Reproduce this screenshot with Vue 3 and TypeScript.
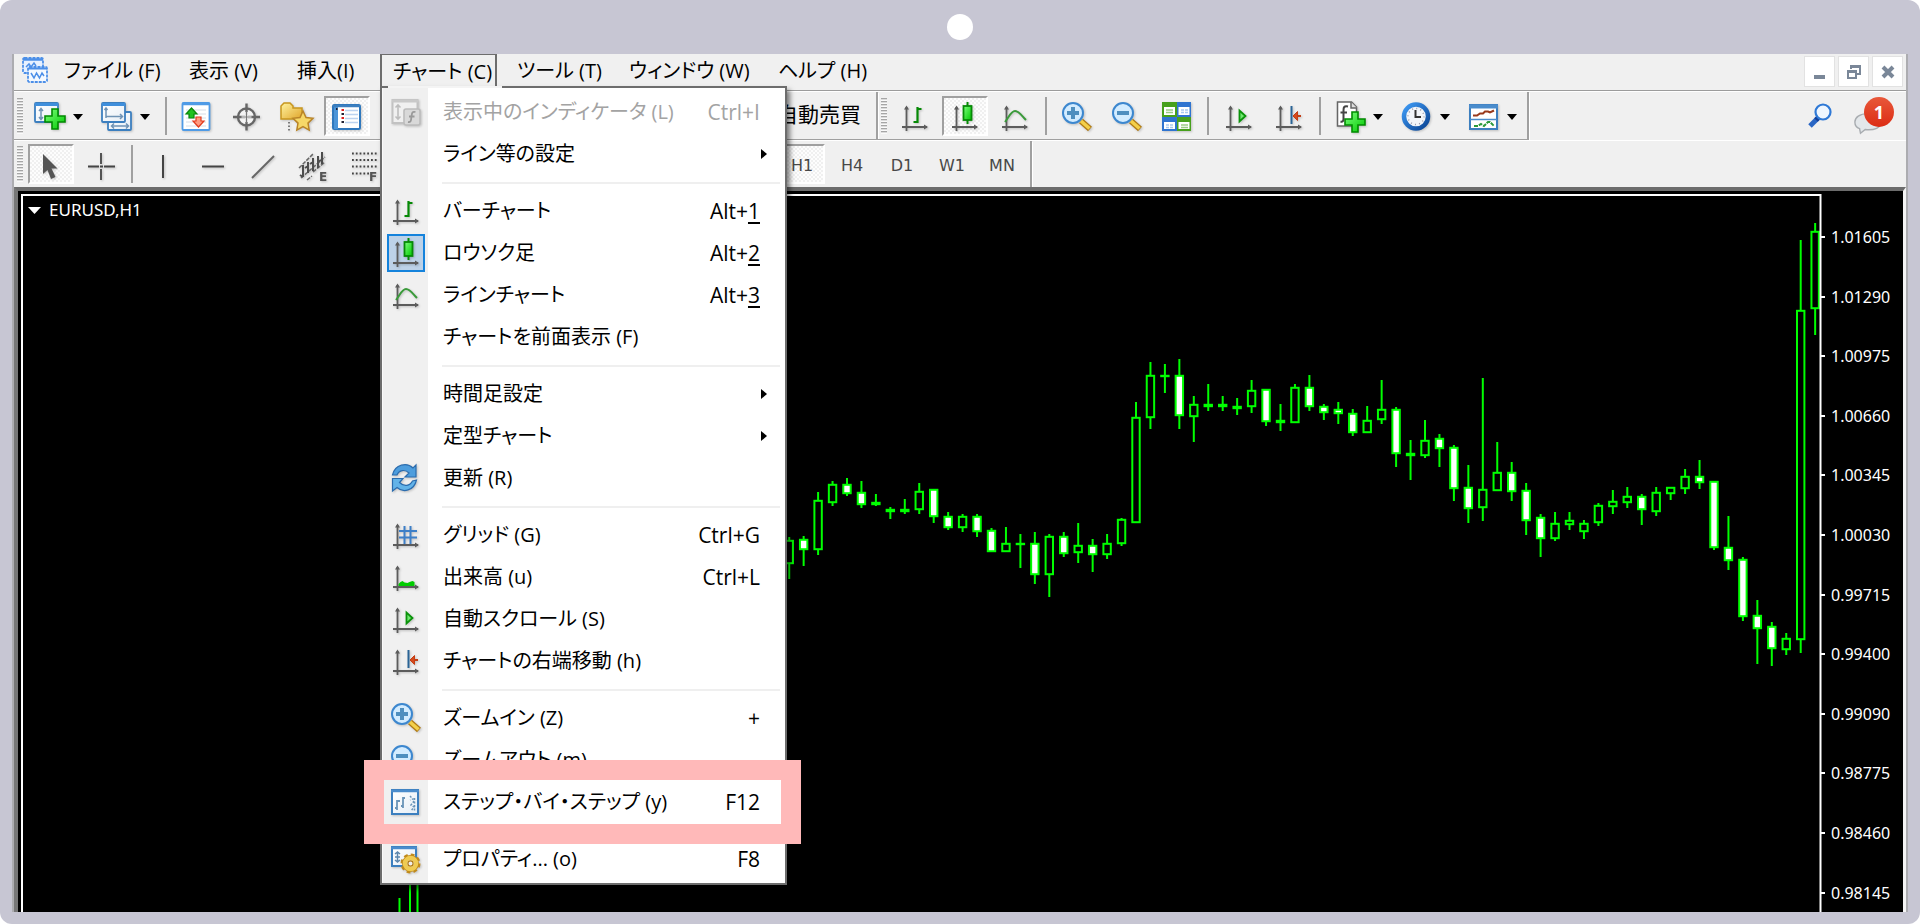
<script setup lang="ts">
interface Tool {
  icon: string
  label: string
  drop?: boolean
  pressed?: boolean
}

interface MenuRow {
  label: string
  icon?: string
  keys?: string
  access?: string
  sub?: boolean
  disabled?: boolean
  checked?: boolean
  marked?: boolean
}

const menus = ['ファイル (F)', '表示 (V)', '挿入(I)', 'チャート (C)', 'ツール (T)', 'ウィンドウ (W)', 'ヘルプ (H)']
const openMenu = 3

const standardTools: Tool[][] = [
  [
    { icon: 'new-chart', label: '新規チャート', drop: true },
    { icon: 'profiles', label: '組表示', drop: true },
  ],
  [
    { icon: 'market', label: '気配値表示' },
    { icon: 'target', label: 'データ' },
    { icon: 'folder', label: 'ナビゲーター' },
    { icon: 'list', label: 'ターミナル', pressed: true },
  ],
]

const chartTools: Tool[][] = [
  [
    { icon: 'bars', label: 'バーチャート' },
    { icon: 'candles', label: 'ロウソク足', pressed: true },
    { icon: 'line', label: 'ラインチャート' },
  ],
  [
    { icon: 'zoom-in', label: 'ズームイン' },
    { icon: 'zoom-out', label: 'ズームアウト' },
    { icon: 'tile', label: '整列' },
  ],
  [
    { icon: 'scroll', label: '自動スクロール' },
    { icon: 'shift', label: 'チャートの右端移動' },
  ],
  [
    { icon: 'indicator', label: 'インディケータ', drop: true },
    { icon: 'clock', label: '時間足設定', drop: true },
    { icon: 'template', label: '定型チャート', drop: true },
  ],
]

const drawTools: Tool[][] = [
  [
    { icon: 'pointer', label: 'カーソル', pressed: true },
    { icon: 'cross', label: 'クロスヘア' },
  ],
  [
    { icon: 'vline', label: '垂直線' },
    { icon: 'hline', label: '水平線' },
    { icon: 'trend', label: 'トレンドライン' },
    { icon: 'channel', label: 'チャネル' },
    { icon: 'fibo', label: 'フィボナッチ' },
  ],
]

const frames = ['H1', 'H4', 'D1', 'W1', 'MN']

const rows: MenuRow[][] = [
  [
    { label: '表示中のインディケータ (L)', icon: 'indicator-list', keys: 'Ctrl+I', disabled: true },
    { label: 'ライン等の設定', sub: true },
  ],
  [
    { label: 'バーチャート', icon: 'bars', keys: 'Alt+', access: '1' },
    { label: 'ロウソク足', icon: 'candles', keys: 'Alt+', access: '2', checked: true },
    { label: 'ラインチャート', icon: 'line', keys: 'Alt+', access: '3' },
    { label: 'チャートを前面表示 (F)' },
  ],
  [
    { label: '時間足設定', sub: true },
    { label: '定型チャート', sub: true },
    { label: '更新 (R)', icon: 'refresh' },
  ],
  [
    { label: 'グリッド (G)', icon: 'grid', keys: 'Ctrl+G' },
    { label: '出来高 (u)', icon: 'volume', keys: 'Ctrl+L' },
    { label: '自動スクロール (S)', icon: 'scroll' },
    { label: 'チャートの右端移動 (h)', icon: 'shift' },
  ],
  [
    { label: 'ズームイン (Z)', icon: 'zoom-in', keys: '+' },
    { label: 'ズームアウト (m)', icon: 'zoom-out' },
    { label: 'ステップ・バイ・ステップ (y)', icon: 'step', keys: 'F12', marked: true },
  ],
  [{ label: 'プロパティ... (o)', icon: 'properties', keys: 'F8' }],
]

// [high, body top, body bottom, low, falling]
type Candle = [number, number, number, number, number]
const candles: Candle[] = [
  [537, 540, 564, 579, 0], [536, 539, 550, 566, 1], [492, 500, 550, 555, 0], [481, 484, 503, 506, 0],
  [478, 484, 494, 496, 1], [481, 492, 505, 508, 1], [494, 502, 505, 506, 0], [507, 509, 512, 519, 0],
  [499, 509, 512, 514, 0], [483, 491, 510, 514, 0], [489, 489, 517, 523, 1], [512, 516, 528, 530, 1],
  [514, 516, 528, 532, 0], [514, 516, 532, 537, 1], [528, 530, 552, 552, 1], [527, 543, 552, 552, 0],
  [534, 543, 544, 568, 0], [532, 543, 575, 584, 1], [534, 536, 575, 597, 0], [532, 536, 554, 557, 1],
  [523, 545, 553, 563, 0], [539, 545, 555, 572, 1], [534, 543, 555, 559, 0], [518, 519, 544, 546, 0],
  [402, 417, 523, 523, 0], [362, 375, 418, 429, 0], [364, 375, 376, 393, 0], [359, 375, 416, 429, 1],
  [396, 404, 417, 442, 0], [384, 404, 407, 411, 0], [396, 404, 407, 411, 0], [398, 406, 409, 415, 0],
  [380, 390, 407, 413, 0], [389, 389, 422, 426, 1], [404, 420, 423, 431, 0], [384, 387, 423, 423, 0],
  [375, 387, 407, 411, 1], [404, 406, 413, 420, 1], [402, 409, 414, 424, 1], [409, 413, 433, 436, 1],
  [406, 420, 433, 433, 0], [380, 409, 420, 424, 0], [407, 409, 454, 467, 1], [440, 453, 456, 480, 0],
  [420, 440, 456, 458, 0], [434, 438, 449, 467, 1], [445, 447, 489, 501, 1], [465, 487, 509, 523, 1],
  [378, 489, 508, 521, 0], [442, 472, 491, 491, 0], [462, 472, 492, 501, 1], [483, 490, 521, 535, 1],
  [514, 517, 539, 557, 1], [512, 523, 539, 541, 0], [512, 520, 525, 530, 0], [520, 523, 532, 539, 0],
  [503, 505, 523, 526, 0], [490, 501, 507, 514, 0], [487, 496, 503, 508, 0], [494, 496, 510, 525, 1],
  [487, 492, 512, 516, 0], [487, 487, 494, 500, 0], [469, 476, 489, 494, 0], [460, 476, 483, 489, 1],
  [481, 481, 548, 550, 1], [516, 547, 561, 570, 1], [557, 559, 617, 621, 1], [600, 615, 629, 664, 1],
  [622, 626, 649, 666, 1], [633, 638, 650, 655, 0], [240, 310, 640, 653, 0], [223, 231, 309, 335, 0],
]
const firstX = 789.2
const stepX = 14.45
const bars = candles.map(([high, top, bottom, low, falling], i) => ({
  x: firstX + i * stepX,
  high,
  top,
  bottom,
  low,
  falling: falling === 1,
  flat: bottom - top < 4,
}))

const prices = [
  '1.01605', '1.01290', '1.00975', '1.00660', '1.00345', '1.00030',
  '0.99715', '0.99400', '0.99090', '0.98775', '0.98460', '0.98145',
].map((text, i) => ({ text, y: Math.round(237 + i * 59.6) }))
</script>

<template>
  <div class="frame">
    <svg class="defs" aria-hidden="true">
      <defs>
        <linearGradient id="g-green" x1="0" y1="0" x2="1" y2="1"><stop offset="0" stop-color="#7dff7d" /><stop offset="1" stop-color="#00c800" /></linearGradient>
        <linearGradient id="g-blue" x1="0" y1="0" x2="1" y2="1"><stop offset="0" stop-color="#3f9bf5" /><stop offset="1" stop-color="#0a4494" /></linearGradient>
        <linearGradient id="g-win" x1="0" y1="0" x2="1" y2="1"><stop offset="0" stop-color="#fff" /><stop offset="1" stop-color="#e6eef6" /></linearGradient>
        <linearGradient id="g-gold" x1="0" y1="0" x2="1" y2="1"><stop offset="0" stop-color="#fff3a0" /><stop offset="1" stop-color="#e0a52a" /></linearGradient>

        <symbol id="axes" viewBox="0 0 32 32">
          <path d="M7.500 30V6M3 26H28" stroke="#5c5c5c" stroke-width="1.800" fill="none" />
          <path d="M5 8.500L7.500 4.500L10 8.500zM25 23.500L29 26L25 28.500z" fill="#5c5c5c" />
        </symbol>
        <symbol id="plus" viewBox="0 0 22 22">
          <path d="M8 1h6v7h7v6h-7v7h-6v-7h-7v-6h7z" fill="url(#g-green)" stroke="#008a00" stroke-width="1.600" />
        </symbol>
        <symbol id="new-chart" viewBox="0 0 32 32">
          <rect x="1" y="2" width="23" height="19" rx="1" fill="url(#g-win)" stroke="#3c7fbf" stroke-width="1.800" />
          <path d="M1 3.500H24" stroke="#3f8fdc" stroke-width="3" />
          <path d="M7 8v10M5 10l2-2.500 2 2.500M5 16l2 2.500 2-2.500" stroke="#6f93b5" stroke-width="1.500" fill="none" />
          <use href="#plus" x="10" y="7" width="22" height="22" />
        </symbol>
        <symbol id="profiles" viewBox="0 0 32 32">
          <rect x="7" y="11" width="23" height="18" rx="1" fill="url(#g-win)" stroke="#3c7fbf" stroke-width="1.800" />
          <path d="M11 25h16M13 22.500l-2.500 2.500 2.500 2.500M25 22.500l2.500 2.500-2.500 2.500" stroke="#6f93b5" stroke-width="1.500" fill="none" />
          <rect x="1" y="2" width="23" height="19" rx="1" fill="url(#g-win)" stroke="#3c7fbf" stroke-width="1.800" />
          <path d="M1 3.500H24" stroke="#3f8fdc" stroke-width="3" />
          <path d="M5 7v10M3.500 9l1.500-2 1.500 2M5 15.500h16M19 13l2.500 2.500-2.500 2.500" stroke="#6f93b5" stroke-width="1.500" fill="none" />
        </symbol>
        <symbol id="market" viewBox="0 0 32 32">
          <rect x="1.500" y="2" width="27" height="27" rx="1" fill="#fff" stroke="#4f9be6" stroke-width="1.800" />
          <path d="M1.500 3H28.500" stroke="#4f9be6" stroke-width="2.500" />
          <path d="M5 9h20M5 13h20M5 17h20M5 21h20M5 25h20" stroke="#d6dde6" stroke-width="1" />
          <path d="M10.500 7l5.500 6h-3v4h-5v-4h-3z" fill="#1fc21f" stroke="#0a870a" stroke-width="1.200" />
          <path d="M17.500 26l5.500-6h-3v-4h-5v4h-3z" fill="#ff9a80" stroke="#e23a1c" stroke-width="1.200" />
        </symbol>
        <symbol id="target" viewBox="0 0 32 32">
          <circle cx="15.500" cy="16" r="8.500" fill="#f4f4f4" stroke="#666" stroke-width="2.400" />
          <path d="M15.500 2.500v27M2 16h27" stroke="#666" stroke-width="2.400" />
          <path d="M15.500 11v10M10.500 16h10" stroke="#f4f4f4" stroke-width="2.600" />
          <path d="M15.500 10v12M9.500 16h12" stroke="#777" stroke-width="1" />
        </symbol>
        <symbol id="folder" viewBox="0 0 36 32">
          <path d="M2 18V5l3-3h6l3 3v2h9v11z" fill="url(#g-gold)" stroke="#c8961e" stroke-width="1.500" />
          <path d="M10 21v10" stroke="#555" stroke-width="1.500" stroke-dasharray="1.500 2" />
          <path d="M24 10l3 6.500 7 .8-5 4.800 1.200 7-6.200-3.400-6.200 3.400 1.200-7-5-4.800 7-.8z" fill="#f6d868" stroke="#b98428" stroke-width="1.500" />
        </symbol>
        <symbol id="list" viewBox="0 0 32 32">
          <rect x="2" y="4" width="27" height="24" rx="1.500" fill="#fff" stroke="#2f78bd" stroke-width="2" />
          <rect x="3" y="4" width="4" height="24" fill="#4a94d8" />
          <path d="M2 5H29" stroke="#3c7fbf" stroke-width="2.500" />
          <path d="M14 9.500h13M14 13.500h13M14 17.500h13M14 21.500h13" stroke="#bcd3f0" stroke-width="1.500" />
          <path d="M10.500 9h2.500M10.500 17h2.500" stroke="#e02020" stroke-width="2" />
          <path d="M10.500 13h2.500M10.500 21h2.500M5 8h1.500" stroke="#223" stroke-width="2" />
        </symbol>
        <symbol id="bars" viewBox="0 0 32 32">
          <use href="#axes" width="32" height="32" />
          <path d="M18.500 6v16M18.500 8h4M14.500 21h4" stroke="#068a06" stroke-width="2.200" fill="none" />
        </symbol>
        <symbol id="candles" viewBox="0 0 32 32">
          <use href="#axes" width="32" height="32" />
          <path d="M18.500 1v22" stroke="#068a06" stroke-width="2" />
          <rect x="14.500" y="5" width="8" height="14" fill="url(#g-green)" stroke="#068a06" stroke-width="1.800" />
        </symbol>
        <symbol id="line" viewBox="0 0 32 32">
          <use href="#axes" width="32" height="32" />
          <path d="M6 21C10 16 12 10 16 10C20 10 23 15 27 19" stroke="#3a9a3a" stroke-width="2" fill="none" />
        </symbol>
        <symbol id="zoom-in" viewBox="0 0 32 32">
          <path d="M20 20l9 8" stroke="#b07a14" stroke-width="6" />
          <path d="M20 20l8.500 7.500" stroke="#f3cf4a" stroke-width="3.500" />
          <circle cx="12" cy="12" r="10" fill="#d3ecff" stroke="#3c87cf" stroke-width="2" />
          <path d="M12 6v12M6 12h12" stroke="#4f8fbf" stroke-width="4" />
        </symbol>
        <symbol id="zoom-out" viewBox="0 0 32 32">
          <path d="M20 20l9 8" stroke="#b07a14" stroke-width="6" />
          <path d="M20 20l8.500 7.500" stroke="#f3cf4a" stroke-width="3.500" />
          <circle cx="12" cy="12" r="10" fill="#d3ecff" stroke="#3c87cf" stroke-width="2" />
          <path d="M6 12h12" stroke="#4f8fbf" stroke-width="4" />
        </symbol>
        <symbol id="tile" viewBox="0 0 32 32">
          <path d="M1 1h15v15H1zM16 16h14v14H16z" fill="#47a01c" />
          <path d="M16 1h14v15H16zM1 16h15v14H1z" fill="#2f74d0" />
          <path d="M3 6h11v8H3zM17.500 6h11v8h-11zM3 21h11v7H3zM17.500 21h11v7h-11z" fill="#fff" />
          <path d="M5 9h7M5 11.500h7M20 24h7M20 26.500h7" stroke="#9ccb85" stroke-width="1.500" />
          <path d="M20 9h7M20 11.500h7M5 24h7M5 26.500h7" stroke="#a9c9f0" stroke-width="1.500" stroke-dasharray="3 1" />
        </symbol>
        <symbol id="scroll" viewBox="0 0 32 32">
          <use href="#axes" width="32" height="32" />
          <path d="M16.500 9.500v11l6-5.500z" fill="#6fe86f" stroke="#0a930a" stroke-width="1.800" />
        </symbol>
        <symbol id="shift" viewBox="0 0 32 32">
          <use href="#axes" width="32" height="32" />
          <path d="M18.500 5v18" stroke="#2a6496" stroke-width="2" />
          <path d="M28 15h-7" stroke="#c43e14" stroke-width="2" />
          <path d="M24.500 10.500l-4.500 4.500 4.500 4.500z" fill="#d64a1c" stroke="#c43e14" stroke-width="1" />
        </symbol>
        <symbol id="indicator" viewBox="0 0 32 32">
          <path d="M3.500 1h14l5 5v19h-19z" fill="#fff" stroke="#666" stroke-width="1.500" />
          <path d="M17 1v6h6" fill="#ddd" stroke="#666" stroke-width="1.500" />
          <path d="M14 5.500c-4-1-4.500 1-4.500 4v8c0 3-1 3.500-3 3M6.500 11.500h6.500" stroke="#444" stroke-width="2" fill="none" />
          <use href="#plus" x="10" y="10" width="22" height="22" />
        </symbol>
        <symbol id="clock" viewBox="0 0 32 32">
          <circle cx="15" cy="15.500" r="12" fill="#f2f5f9" stroke="url(#g-blue)" stroke-width="4.500" />
          <circle cx="15" cy="15.500" r="8" fill="none" stroke="#99a" stroke-width="1.500" stroke-dasharray="1 3.190" />
          <path d="M14.500 9v7h5.500" stroke="#333" stroke-width="2" fill="none" />
        </symbol>
        <symbol id="template" viewBox="0 0 32 32">
          <rect x="2" y="4" width="27" height="24" fill="#fff" stroke="#3c7fbf" stroke-width="2" />
          <path d="M1 5.500H30" stroke="#4a8ccc" stroke-width="4" />
          <path d="M2 18.500h27" stroke="#4a8ccc" stroke-width="1.500" />
          <path d="M5 14.500h4l3-2h3l2-2h3l2 1 4-2" stroke="#993a1c" stroke-width="2" fill="none" />
          <path d="M6 25h4l3-2 3 2 4-4h2l4 4" stroke="#2a9a3a" stroke-width="2" stroke-dasharray="4 1" fill="none" />
        </symbol>
        <symbol id="pointer" viewBox="0 0 32 32">
          <path d="M8 4v20l4.500-4 3.500 9 4.500-2-4-8.500h6z" fill="#555" />
        </symbol>
        <symbol id="cross" viewBox="0 0 32 32">
          <path d="M16 3v11M16 19v11M3 16.500h11M19 16.500h11M15 16.500h3" stroke="#444" stroke-width="1.800" />
        </symbol>
        <symbol id="vline" viewBox="0 0 32 32"><path d="M16 5v23" stroke="#444" stroke-width="2" /></symbol>
        <symbol id="hline" viewBox="0 0 32 32"><path d="M5 16.500h22" stroke="#444" stroke-width="2" /></symbol>
        <symbol id="trend" viewBox="0 0 32 32"><path d="M5 28L27 6" stroke="#666" stroke-width="2" /></symbol>
        <symbol id="channel" viewBox="0 0 32 32">
          <path d="M2 18L16 4M4 28L28 7M10 30l5-4M16 22L28 12" stroke="#666" stroke-width="1.500" stroke-dasharray="4 1.200" fill="none" />
          <path d="M6 15v12M11 12v11M16 8v13M21 6v12M25 2v12M3 25l3 2M8 18l3-2M13 14l3-2M21 12l3-2" stroke="#4c4c4c" stroke-width="2" />
          <text x="22" y="31" class="mini">E</text>
        </symbol>
        <symbol id="fibo" viewBox="0 0 32 32">
          <path d="M5 3.500h25M5 10h25M5 16.500h25M5 23.500h17" stroke="#444" stroke-width="1.800" stroke-dasharray="1.800 2" />
          <text x="22" y="31" class="mini">F</text>
        </symbol>
        <symbol id="refresh" viewBox="0 0 32 32">
          <path d="M2.500 13C5 2 17 0 23 6l3-3v12H15l4-4C15 7 9 8 7 13z" fill="#4d9ddd" stroke="#2b6cae" stroke-width="1.200" />
          <path d="M26.500 18C24 29 13 31 7 25.500l-4.500 3.500V16.500H13l-3.500 4C14 25 20 24 22.500 19z" fill="#63b3e8" stroke="#2b6cae" stroke-width="1.200" />
        </symbol>
        <symbol id="grid" viewBox="0 0 32 32">
          <use href="#axes" width="32" height="32" />
          <path d="M14.500 7v18M20.500 7v18M9 12h18M9 18.500h18" stroke="#3c7fc8" stroke-width="2" />
        </symbol>
        <symbol id="volume" viewBox="0 0 32 32">
          <use href="#axes" width="32" height="32" />
          <path d="M8.500 25v-3l3-1 3-2 2 2 3-1 2 1 3-2 2 2v4z" fill="#0d1a0d00" />
          <path d="M8.500 25v-2l2-2 2-1 2 1.500 3 .5 2-1 3-1 2 1v4z" fill="#0c0" />
        </symbol>
        <symbol id="step" viewBox="0 0 32 32">
          <rect x="2" y="4" width="26" height="24" fill="url(#g-win)" stroke="#3c7fbf" stroke-width="2" />
          <path d="M1 5H29" stroke="#4a8ccc" stroke-width="2.500" />
          <path d="M7 14v10M5 22h2M7 15h3M13 11v11M11 20h2M13 12h2" stroke="#6a94b8" stroke-width="1.800" />
          <path d="M20 10l3 3-3 1M24 15l-3 4 3 2-3 4M24.500 12v13" stroke="#6a94b8" stroke-width="1.500" stroke-dasharray="2 1.500" fill="none" />
        </symbol>
        <symbol id="properties" viewBox="0 0 32 32">
          <rect x="2" y="4" width="24" height="19" fill="url(#g-win)" stroke="#3c7fbf" stroke-width="2" />
          <path d="M1 5H27" stroke="#4a8ccc" stroke-width="2.500" />
          <path d="M7.500 9v10M5 11l2.500-2 2.500 2M5 17l2.500 2 2.500-2M5 14h5" stroke="#5d87ad" stroke-width="1.500" fill="none" />
          <circle cx="20.500" cy="20.500" r="8.500" fill="none" stroke="#c08a1c" stroke-width="3" stroke-dasharray="3.700 2.970" />
          <circle cx="20.500" cy="20.500" r="5.500" fill="#fff" stroke="#c08a1c" stroke-width="6" />
          <circle cx="20.500" cy="20.500" r="5.500" fill="#fff" stroke="#efcb52" stroke-width="4.500" />
          <circle cx="20.500" cy="20.500" r="2.600" fill="#eee" stroke="#b07a14" stroke-width="1.200" />
        </symbol>
        <symbol id="indicator-list" viewBox="0 0 32 32">
          <rect x="2.500" y="4" width="25" height="23" fill="#f0f0f0" stroke="#c2c2c2" stroke-width="2" />
          <path d="M2 5h26" stroke="#c9c9c9" stroke-width="3" />
          <path d="M8 9v14M5.500 11.500L8 9l2.500 2.500M5.500 20.500L8 23l2.500-2.500" stroke="#bdbdbd" stroke-width="1.600" fill="none" />
          <rect x="14" y="13" width="16" height="16" rx="2" fill="#d9d9d9" stroke="#bcbcbc" stroke-width="1.600" />
          <path d="M25.500 16c-3-.8-3.500.5-3.800 3l-.7 5c-.3 2-1 2.300-3 2M19 20.500h5.500" stroke="#999" stroke-width="1.800" fill="none" />
        </symbol>
        <symbol id="logo" viewBox="0 0 26 26">
          <rect x="1" y="1" width="20" height="15" rx="1.500" fill="#e7f1ff" stroke="#4c8fe8" stroke-width="1.800" stroke-dasharray="3 1" />
          <path d="M1 2.500h20" stroke="#4c8fe8" stroke-width="2.500" />
          <path d="M4 10l3-3 2 3 3-4 2 3" stroke="#4c8fe8" stroke-width="1.500" fill="none" />
          <rect x="6" y="10" width="19" height="15" rx="1.500" fill="#f4f9ff" stroke="#4c8fe8" stroke-width="1.800" stroke-dasharray="3 1" />
          <path d="M6 11.500h19" stroke="#4c8fe8" stroke-width="2" />
          <path d="M9 16l3 5 2.500-5 3 5 2.500-5 2 3" stroke="#4c8fe8" stroke-width="1.500" fill="none" />
        </symbol>
      </defs>
    </svg>

    <span class="camera"></span>

    <main class="window">
      <header class="menubar">
        <svg class="logo"><use href="#logo" /></svg>
        <nav class="menus">
          <div v-for="(name, i) in menus" :key="name" class="menu-slot">
            <button type="button" class="menu-name" :class="{ open: i === openMenu }">{{ name }}</button>
            <div v-if="i === openMenu" class="dropdown" role="menu">
              <div v-for="(group, g) in rows" :key="g" class="menu-group">
                <button
                  v-for="row in group"
                  :key="row.label"
                  type="button"
                  role="menuitem"
                  class="row"
                  :class="{ marked: row.marked }"
                  :disabled="row.disabled"
                >
                  <span class="gutter" :class="{ checked: row.checked }">
                    <svg v-if="row.icon" class="icon"><use :href="'#' + row.icon" /></svg>
                  </span>
                  <span class="row-label">{{ row.label }}</span>
                  <span v-if="row.keys" class="keys">{{ row.keys }}<u v-if="row.access">{{ row.access }}</u></span>
                  <svg v-if="row.sub" class="sub" viewBox="0 0 6 10"><path d="M0 0v10l6-5z" /></svg>
                </button>
              </div>
            </div>
          </div>
        </nav>
        <div class="controls">
          <button type="button" aria-label="最小化">
            <svg viewBox="0 0 16 16"><path d="M2 13h11" stroke="#7a8798" stroke-width="4" /></svg>
          </button>
          <button type="button" aria-label="元に戻す">
            <svg viewBox="0 0 16 16"><path d="M5 5V2h9v8h-3" stroke="#7a8798" stroke-width="2" fill="none" /><path d="M4 2.500h11" stroke="#7a8798" stroke-width="3" /><path d="M2 7h8v7H2zM2 8h8" stroke="#7a8798" stroke-width="2" fill="none" /></svg>
          </button>
          <button type="button" aria-label="閉じる">
            <svg viewBox="0 0 16 16"><path d="M3 3l10 10M13 3L3 13" stroke="#7a8798" stroke-width="4" /></svg>
          </button>
        </div>
      </header>

      <div class="bar">
        <section class="group standard">
          <span class="grip"></span>
          <template v-for="(set, s) in standardTools" :key="s">
            <span v-if="s > 0" class="rule"></span>
            <button v-for="t in set" :key="t.icon" type="button" class="tool" :class="{ drop: t.drop, pressed: t.pressed }" :aria-label="t.label">
              <svg class="icon" :class="{ wide: t.icon === 'folder' }"><use :href="'#' + t.icon" /></svg>
              <span v-if="t.drop" class="caret"></span>
            </button>
          </template>
          <button type="button" class="auto">自動売買</button>
        </section>
        <section class="group">
          <span class="grip"></span>
          <template v-for="(set, s) in chartTools" :key="s">
            <span v-if="s > 0" class="rule"></span>
            <button v-for="t in set" :key="t.icon" type="button" class="tool" :class="{ drop: t.drop, pressed: t.pressed }" :aria-label="t.label">
              <svg class="icon"><use :href="'#' + t.icon" /></svg>
              <span v-if="t.drop" class="caret"></span>
            </button>
          </template>
        </section>
        <div class="aside">
          <button type="button" class="find" aria-label="検索">
            <svg viewBox="0 0 26 26"><path d="M12 14L3 23" stroke="#2a66c4" stroke-width="5" /><path d="M12 14L9 17" stroke="#123f9a" stroke-width="5" /><circle cx="16" cy="9" r="7.500" fill="#eef6ff" stroke="#2f79d6" stroke-width="2.200" /></svg>
          </button>
          <button type="button" class="chat">
            <svg viewBox="0 0 32 24"><path d="M16 2C7 2 2 6 2 11c0 4 2 6 5 7l1 5 5-4c10 1 17-2 17-8C30 5 24 2 16 2z" fill="#e3e7ea" stroke="#a8acb0" stroke-width="1.500" /></svg>
            <span class="badge">1</span>
          </button>
        </div>
      </div>

      <div class="bar second">
        <section class="group standard-draw">
          <span class="grip"></span>
          <template v-for="(set, s) in drawTools" :key="s">
            <span v-if="s > 0" class="rule"></span>
            <button v-for="t in set" :key="t.icon" type="button" class="tool" :class="{ pressed: t.pressed }" :aria-label="t.label">
              <svg class="icon"><use :href="'#' + t.icon" /></svg>
            </button>
          </template>
          <div class="frames">
            <button v-for="f in frames" :key="f" type="button" class="tool period" :class="{ pressed: f === 'H1' }">{{ f }}</button>
          </div>
        </section>
      </div>

      <div class="chart">
        <svg viewBox="18 191 1885 721" preserveAspectRatio="xMaxYMin slice" role="img" aria-label="EURUSD,H1">
          <g class="bars">
            <path d="M399.500 898V914M410 860V914M417.500 860V914" />
            <g v-for="b in bars" :key="b.x" :class="{ falling: b.falling, flat: b.flat }">
              <path :d="`M${b.x} ${b.high}V${b.low}`" />
              <rect :x="b.x - 3.7" :y="b.top + 0.8" width="7.4" :height="Math.max(b.bottom - b.top - 1.6, 0.4)" />
            </g>
          </g>
          <path class="border" d="M22 914V195H1820.500V914" />
          <path d="M28 207h13l-6.500 7z" fill="#fff" />
          <text class="symbol-name" x="49" y="216">EURUSD,H1</text>
          <g v-for="p in prices" :key="p.text">
            <path class="border" :d="`M1821 ${p.y}h4`" />
            <text class="price" x="1831" :y="p.y + 6">{{ p.text }}</text>
          </g>
        </svg>
      </div>
    </main>
  </div>
</template>

<style>
body {
  margin: 0;
  background: #fff;
}
</style>

<style scoped>
* {
  box-sizing: border-box;
}

.frame {
  display: flex;
  flex-direction: column;
  height: 100vh;
  padding: 0 12px 12px;
  border-radius: 12px;
  background: #c7c6d3;
  color: #000;
  font-family: "Open Sans", "Noto Sans CJK JP", sans-serif;
  font-size: 20px;
  font-feature-settings: "palt";
  line-height: 24px;
  overflow: hidden;
}

.defs {
  position: absolute;
  width: 0;
  height: 0;
}

.mini {
  font: 700 12px "DejaVu Sans", sans-serif;
  fill: #555;
}

.camera {
  flex: none;
  align-self: center;
  width: 26px;
  height: 26px;
  margin: 14px 0;
  border-radius: 50%;
  background: #fff;
}

.window {
  flex: 1;
  min-height: 0;
  display: flex;
  flex-direction: column;
  border: solid #acacb0;
  border-width: 0 2px;
  background: #f0f0f0;
}

button {
  padding: 0;
  border: 0;
  background: none;
  color: inherit;
  font: inherit;
  font-feature-settings: inherit;
  text-align: left;
  white-space: nowrap;
}

.menubar {
  flex: none;
  display: flex;
  align-items: flex-start;
  height: 37px;
  border-bottom: 1px solid #9c9c9c;
}

.logo {
  width: 26px;
  height: 26px;
  margin: 3px 3px 0 8px;
}

.menus {
  display: grid;
  grid-template-columns: 125px 108px 96px 124px 112px 149px 112px;
}

.menu-slot {
  position: relative;
}

.menu-name {
  height: 34px;
  padding: 0 12px;
  border: 1px solid transparent;
}

.menu-name.open {
  width: 117px;
  border: solid #6d6d6d;
  border-width: 1px 2px 0;
  padding: 0 11px;
}

.dropdown {
  position: absolute;
  z-index: 5;
  top: 32px;
  left: 0;
  width: 407px;
  padding: 3px 0;
  border: 2px solid #6d6d6d;
  background: linear-gradient(90deg, #fafafa 1px, #f0f0f0 1px 46px, #fff 46px);
  box-shadow: 3px 4px 5px rgba(0, 0, 0, 0.5);
}

.dropdown::before {
  content: "";
  position: absolute;
  top: -2px;
  left: 6px;
  width: 114px;
  height: 2px;
  background: #f4f4f4;
}

.menu-group + .menu-group {
  margin-top: 15px;
}

.menu-group + .menu-group::before {
  content: "";
  position: absolute;
  left: 60px;
  right: 5px;
  height: 2px;
  margin-top: -8px;
  background: #efefef;
}

.row {
  position: relative;
  display: flex;
  align-items: center;
  width: 100%;
  height: 42px;
  padding-right: 25px;
}

.row:disabled {
  color: #a3a3a3;
}

.gutter {
  display: flex;
  align-items: center;
  justify-content: center;
  width: 38px;
  height: 38px;
  margin: 0 18px 0 5px;
}

.gutter.checked {
  border: 2px solid #1583dc;
  background: #bdd2e8;
}

.row-label {
  flex: 1;
}

.keys {
  font-size: 21px;
}

.keys u {
  text-decoration-thickness: 2px;
  text-underline-offset: 3px;
}

.sub {
  width: 6px;
  height: 10px;
  margin-right: -7px;
}

.marked {
  z-index: 1;
}

.marked::after {
  content: "";
  position: absolute;
  inset: -21px -16px -21px -18px;
  border: 20px solid #ffb9b9;
}

.icon {
  flex: none;
  width: 32px;
  height: 32px;
  filter: drop-shadow(1px 1px 1px rgba(0, 0, 0, 0.2));
}

.icon.wide {
  width: 36px;
}

.controls {
  display: flex;
  gap: 3px;
  margin: 2px 3px 0 auto;
}

.controls button {
  display: grid;
  place-items: center;
  width: 31px;
  height: 31px;
  border: 1px solid #e2e2e2;
  background: #fff;
}

.controls svg {
  width: 16px;
  height: 16px;
}

.bar {
  flex: none;
  display: flex;
  height: 49px;
  border-top: 1px solid #fff;
}

.group {
  display: flex;
  align-items: center;
  padding-left: 3px;
  border: solid #a0a0a0;
  border-width: 0 2px 1px 0;
  box-shadow: 1px 1px #fff;
}

.standard {
  width: 864px;
}

.grip {
  width: 6px;
  height: 36px;
  margin-right: 3px;
  background: repeating-linear-gradient(#a6a6a6 0 1px, #dcdcdc 1px 2px, #fafafa 2px 3px);
}

.rule {
  width: 2px;
  height: 38px;
  margin: 0 5px;
  background: #a0a0a0;
}

.tool {
  display: flex;
  align-items: center;
  justify-content: center;
  width: 46px;
  height: 40px;
  margin: 0 2px;
  padding-top: 3px;
  border: 2px solid transparent;
}

.tool.pressed {
  border-color: #a0a0a0 #fff #fff #a0a0a0;
  background: repeating-conic-gradient(#fdfdfd 0 25%, #f0f0f0 0 50%) 0 0 / 4px 4px;
}

.tool.drop {
  width: 67px;
  margin: 0;
  justify-content: flex-start;
  gap: 7px;
  padding-left: 6px;
}

.caret {
  border: 5px solid transparent;
  border-top: 6px solid #000;
  border-bottom: 0;
}

.auto {
  margin: 0 15px 0 auto;
  padding-bottom: 4px;
  font-size: 21px;
  font-feature-settings: normal;
}

.aside {
  display: flex;
  align-items: center;
  gap: 20px;
  margin: 0 12px 0 auto;
}

.find svg {
  display: block;
  width: 26px;
  height: 26px;
}

.chat {
  position: relative;
  width: 41px;
  height: 38px;
}

.chat svg {
  position: absolute;
  left: 0;
  bottom: 0;
  width: 30px;
  height: 24px;
}

.badge {
  position: absolute;
  top: 0;
  right: 0;
  width: 30px;
  height: 30px;
  border-radius: 50%;
  background: linear-gradient(#e8583a, #dc2c14);
  color: #fff;
  font: 700 18px/30px "Open Sans", sans-serif;
  text-align: center;
}

.second {
  height: 47px;
}

.standard-draw {
  width: 1018px;
  border-bottom: 0;
}

.frames {
  display: flex;
  margin: 0 3px 0 auto;
}

.period {
  color: #484848;
  font: 16px "DejaVu Sans", sans-serif;
}

.chart {
  flex: 1;
  min-height: 0;
  border: solid;
  border-width: 4px 3px 0 4px;
  border-color: #6c6c6c #f4f4f4 #000 #777;
  background: #000;
}

.chart > svg {
  display: block;
  width: 100%;
  height: 100%;
}

.bars path,
.bars rect {
  fill: none;
  stroke: #0f0;
  stroke-width: 2;
}

.bars .falling rect {
  fill: #fff;
}

.bars g:not(.falling) > rect {
  fill: #000;
}

.bars .flat > rect {
  fill: #0f0;
}

.border {
  fill: none;
  stroke: #fff;
  stroke-width: 2;
}

.price,
.symbol-name {
  fill: #fff;
  font: 16px "Noto Sans", sans-serif;
}

.symbol-name {
  font-size: 17px;
}
</style>
